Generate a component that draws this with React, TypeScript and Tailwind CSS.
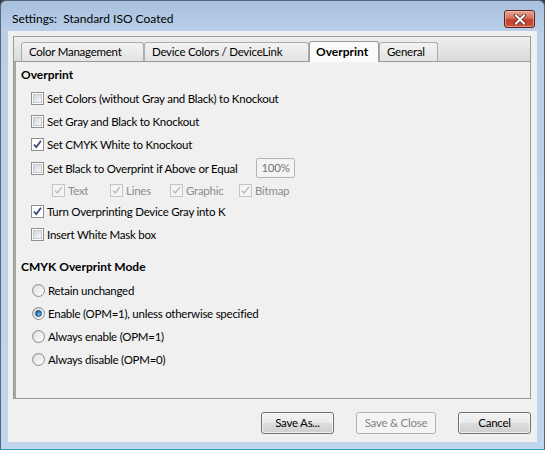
import React from "react";

function CheckBox({ checked = false, disabled = false }: { checked?: boolean; disabled?: boolean }) {
  return (
    <div
      className={
        "relative w-[13px] h-[13px] shrink-0 border " +
        (disabled ? "border-[#c5c5c5] bg-[#f4f4f4]" : "border-[#8e8f8f] bg-white")
      }
    >
      {!checked && !disabled && (
        <div className="absolute left-[1px] top-[1px] w-[9px] h-[9px] border border-[#c3c7cc] bg-[linear-gradient(135deg,#d3d6db,#f8f8f8)]" />
      )}
      {checked && (
        <svg className="absolute left-0 top-0" width="11" height="11" viewBox="0 0 11 11">
          <path
            d="M2 5.6 L4.3 8 L9 1.8"
            fill="none"
            stroke={disabled ? "#b4b8bc" : "#3b4a78"}
            strokeWidth={disabled ? 1.3 : 1.8}
          />
        </svg>
      )}
    </div>
  );
}

function Radio({ checked = false }: { checked?: boolean }) {
  return (
    <div className="relative w-[13px] h-[13px] shrink-0 rounded-full border border-[#8e8f8f] bg-[linear-gradient(135deg,#cfd2d6,#fbfbfb)] flex items-center justify-center">
      {checked ? (
        <div className="w-[7px] h-[7px] rounded-full bg-[radial-gradient(circle_at_60%_65%,#78c0ee,#2a78b8_55%,#0f3f6e)] border border-[#1b4d7f]" />
      ) : (
        <div className="w-[9px] h-[9px] rounded-full bg-[linear-gradient(135deg,#dfe1e4,#fdfdfd)]" />
      )}
    </div>
  );
}

function CheckRow({ label, checked, h, children }: { label: string; checked?: boolean; h: string; children?: React.ReactNode }) {
  return (
    <div className={"relative flex items-center pl-[10px] " + h}>
      <CheckBox checked={checked} />
      <span className="ml-[3px] leading-none whitespace-nowrap">{label}</span>
      {children}
    </div>
  );
}

function RadioRow({ label, checked }: { label: string; checked?: boolean }) {
  return (
    <div className="flex items-center pl-[11px] h-[23px]">
      <Radio checked={checked} />
      <span className="ml-[3px] leading-none whitespace-nowrap">{label}</span>
    </div>
  );
}

function SubCheck({ label, w }: { label: string; w: string }) {
  return (
    <div className={"flex items-center " + w}>
      <CheckBox checked disabled />
      <span className="ml-[3px] leading-none text-[#8d8d8d]">{label}</span>
    </div>
  );
}

function Button({ label, w, disabled }: { label: string; w: string; disabled?: boolean }) {
  return (
    <div
      className={
        "h-[22px] rounded-[3px] border flex items-center justify-center leading-none " +
        w +
        (disabled
          ? " border-[#adb2b5] bg-[#f4f4f4] text-[#838383]"
          : " border-[#707070] bg-[linear-gradient(#f2f2f2,#ebebeb_50%,#dddddd_50%,#cfcfcf)] text-black shadow-[inset_0_0_0_1px_rgba(255,255,255,0.7)]")
      }
    >
      {label}
    </div>
  );
}

function Tab({ label, w, selected }: { label: string; w: string; selected?: boolean }) {
  return (
    <div
      className={
        "flex items-center border border-b-0 rounded-t-[3px] leading-none whitespace-nowrap " +
        w +
        (selected
          ? " h-[21px] border-[#9a9a9a] bg-[#fbfbfb] font-bold text-[12px] tracking-normal -mb-px relative z-10 pl-[6px]"
          : " h-[19px] pl-[7px] border-[#acacac] bg-[linear-gradient(#f3f3f3,#e3e3e3)]")
      }
    >
      {label}
    </div>
  );
}

export default function App() {
  return (
    <div className="w-[545px] h-[450px] bg-[#3a3a3a] text-[11.5px] tracking-[-0.25px] text-black font-['Lato',sans-serif] overflow-hidden">
      <div className="w-full h-full rounded-t-[6px] border border-[#56687c] border-b-[#2f9fbd] bg-[linear-gradient(#a6c0dd,#b9cfe8_30px,#c0d6ed)] flex flex-col">
        <div className="h-[30px] flex items-start shrink-0 pl-[11px] pr-[9px]">
          <span className="flex-1 mt-[10px] text-[12px] tracking-normal leading-[16px] whitespace-pre">Settings:  Standard ISO Coated</span>
          <div className="mt-[9px] w-[31px] h-[18px] rounded-[3px] border border-[#5b2222] bg-[linear-gradient(#e8a895,#d46f5c_45%,#c0402c_55%,#c9563f)] shadow-[inset_0_0_0_1px_rgba(255,190,170,0.6)] flex items-center justify-center">
            <svg width="14" height="11" viewBox="0 0 14 11">
              <path d="M3 1.5 L11 9.5 M11 1.5 L3 9.5" stroke="#5a2a2a" strokeWidth="3.6" strokeLinecap="square" />
              <path d="M3 1.5 L11 9.5 M11 1.5 L3 9.5" stroke="#ffffff" strokeWidth="2" strokeLinecap="square" />
            </svg>
          </div>
        </div>
        <div className="flex-1 mx-[7px] mb-[7px] bg-[#f0f0f0] flex flex-col pl-[5px] pr-[6px] pt-[5px] pb-[8px]">
          <div className="flex-1 flex flex-col border border-[#9a9a9a]">
            <div className="h-[24px] shrink-0 flex items-end pl-[7px] bg-[linear-gradient(#efefef,#dadada)]">
              <Tab label="Color Management" w="w-[123px]" />
              <Tab label="Device Colors / DeviceLink" w="w-[165px]" />
              <Tab label="Overprint" w="w-[70px]" selected />
              <Tab label="General" w="w-[59px]" />
            </div>
            <div className="flex-1 border-t border-l-2 border-[#999999] border-l-[#a6a6a6] pl-[5px]">
              <div className="mt-[5px] leading-[16px] font-bold text-[12px] tracking-normal">Overprint</div>
              <div className="mt-[4px] flex flex-col">
                <CheckRow h="h-[23px]" label="Set Colors (without Gray and Black) to Knockout" />
                <CheckRow h="h-[23px]" label="Set Gray and Black to Knockout" />
                <CheckRow h="h-[23px]" label="Set CMYK White to Knockout" checked />
                <CheckRow h="h-[25px]" label="Set Black to Overprint if Above or Equal">
                  <div className="absolute left-[235px] top-[2px] w-[39px] h-[20px] border border-[#b4b4b4] rounded-[2px] bg-[#f4f4f4] text-[#777777] flex items-center justify-center leading-none">
                    100%
                  </div>
                </CheckRow>
                <div className="h-[19px] flex items-center pl-[31px]">
                  <SubCheck label="Text" w="w-[58px]" />
                  <SubCheck label="Lines" w="w-[60px]" />
                  <SubCheck label="Graphic" w="w-[69px]" />
                  <SubCheck label="Bitmap" w="w-[70px]" />
                </div>
                <CheckRow h="h-[23px]" label="Turn Overprinting Device Gray into K" checked />
                <CheckRow h="h-[23px]" label="Insert White Mask box" />
              </div>
              <div className="mt-[13px] leading-[16px] font-bold text-[12px] tracking-normal">CMYK Overprint Mode</div>
              <div className="mt-[4px] flex flex-col">
                <RadioRow label="Retain unchanged" />
                <RadioRow label="Enable (OPM=1), unless otherwise specified" checked />
                <RadioRow label="Always enable (OPM=1)" />
                <RadioRow label="Always disable (OPM=0)" />
              </div>
            </div>
          </div>
          <div className="mt-[13px] h-[22px] shrink-0 flex justify-end gap-[22px]">
            <Button label="Save As..." w="w-[73px]" />
            <Button label="Save & Close" w="w-[80px]" disabled />
            <Button label="Cancel" w="w-[73px]" />
          </div>
        </div>
      </div>
    </div>
  );
}
